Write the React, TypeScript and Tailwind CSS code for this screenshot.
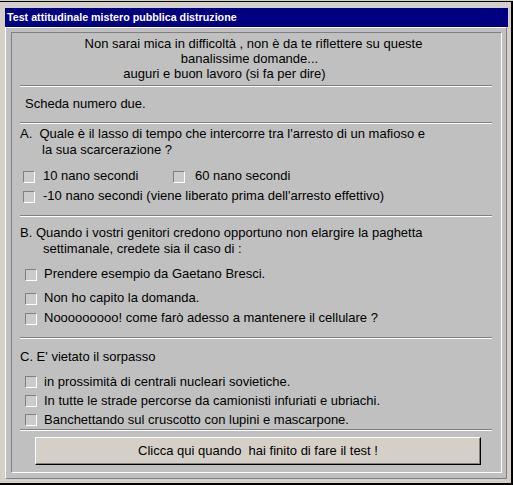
const Check = ({ className = '' }: { className?: string }) => (
  <span
    className={`block w-[12px] h-[12px] shrink-0 border border-t-[#808080] border-l-[#808080] border-r-white border-b-white bg-[#cbcbcb] ${className}`}
  />
)

const Rule = ({ className = '' }: { className?: string }) => (
  <div className={`ml-[8px] w-[472px] h-[2px] border-t border-b border-t-[#808080] border-b-white ${className}`} />
)

function Option({ label, className = '', top = 'mt-[5px]', gap = 'ml-[8px]' }: { label: string; className?: string; top?: string; gap?: string }) {
  return (
    <div className={`flex items-start ${className}`}>
      <Check className={top} />
      <span className={gap}>{label}</span>
    </div>
  )
}

export default function App() {
  return (
    <div className="w-[513px] h-[485px] bg-[#d4d0c8] pt-[1px] font-['Liberation_Sans',Arial,sans-serif] text-black">
      <div className="h-[484px] border-t border-r-2 border-b-2 border-black pt-[6px] pl-[5px] pr-[3px]">
        {/* title bar */}
        <div className="w-[503px] h-[19px] bg-[#000080] pl-[2px] text-[10.7px] font-bold leading-[19px] text-white">
          Test attitudinale mistero pubblica distruzione
        </div>

        {/* outer panel */}
        <div className="w-[502px] h-[452px] border border-t-white border-l-white border-r-[#808080] border-b-[#808080] bg-[#c0c0c0] pt-[4px] pl-[5px]">
          {/* inner panel */}
          <div className="w-[491px] h-[441px] border border-t-[#808080] border-l-[#808080] border-r-white border-b-white text-[13px]">
            <div className="mt-[3px] text-center leading-[15px]">
              <p className="pr-[6px]">Non sarai mica in difficoltà , non è da te riflettere su queste</p>
              <p className="pr-[14px]">banalissime domande...</p>
              <p className="pr-[64px]">auguri e buon lavoro (si fa per dire)</p>
            </div>

            <Rule className="mt-[4px]" />
            <p className="mt-[9px] pl-[13px] leading-[15px]">Scheda numero due.</p>
            <Rule className="mt-[11px]" />

            {/* A */}
            <div className="mt-[2px] pl-[8px] leading-[16px]">
              <p className="whitespace-pre">A.  Quale è il lasso di tempo che intercorre tra l'arresto di un mafioso e</p>
              <p className="pl-[22px]">la sua scarcerazione ?</p>
            </div>
            <div className="mt-[8px] pl-[11px] leading-[20px]">
              <div className="flex h-[20px]">
                <Option label="10 nano secondi" className="w-[150px]" />
                <Option label="60 nano secondi" gap="ml-[10px]" />
              </div>
              <Option label="-10 nano secondi (viene liberato prima dell'arresto effettivo)" className="h-[20px]" />
            </div>
            <Rule className="mt-[9px]" />

            {/* B */}
            <div className="mt-[8px] pl-[8px] leading-[16px]">
              <p>B. Quando i vostri genitori credono opportuno non elargire la paghetta</p>
              <p className="pl-[23px]">settimanale, credete sia il caso di :</p>
            </div>
            <div className="pl-[13px] leading-[20px]">
              <Option label="Prendere esempio da Gaetano Bresci." className="mt-[7px] h-[20px]" gap="ml-[7px]" />
              <Option label="Non ho capito la domanda." className="mt-[4px] h-[20px]" gap="ml-[7px]" />
              <Option label="Nooooooooo! come farò adesso a mantenere il cellulare ?" className="h-[20px]" gap="ml-[7px]" />
            </div>
            <Rule className="mt-[9px]" />

            {/* C */}
            <p className="mt-[10px] pl-[8px] leading-[15px]">C. E' vietato il sorpasso</p>
            <div className="mt-[8px] pl-[13px] leading-[19px]">
              <Option label="in prossimità di centrali nucleari sovietiche." className="h-[19px]" top="mt-[4px]" gap="ml-[7px]" />
              <Option label="In tutte le strade percorse da camionisti infuriati e ubriachi." className="h-[19px]" top="mt-[4px]" gap="ml-[7px]" />
              <Option label="Banchettando sul cruscotto con lupini e mascarpone." className="h-[19px]" top="mt-[4px]" gap="ml-[7px]" />
            </div>
            <Rule />

            <button className="mt-[6px] ml-[23px] block w-[446px] h-[28px] border border-t-white border-l-white border-r-black border-b-black bg-[#d4d0c8] shadow-[inset_-1px_-1px_#808080] text-center text-[13px] leading-[26px] whitespace-pre">
              Clicca qui quando  hai finito di fare il test !
            </button>
          </div>
        </div>
      </div>
    </div>
  )
}
